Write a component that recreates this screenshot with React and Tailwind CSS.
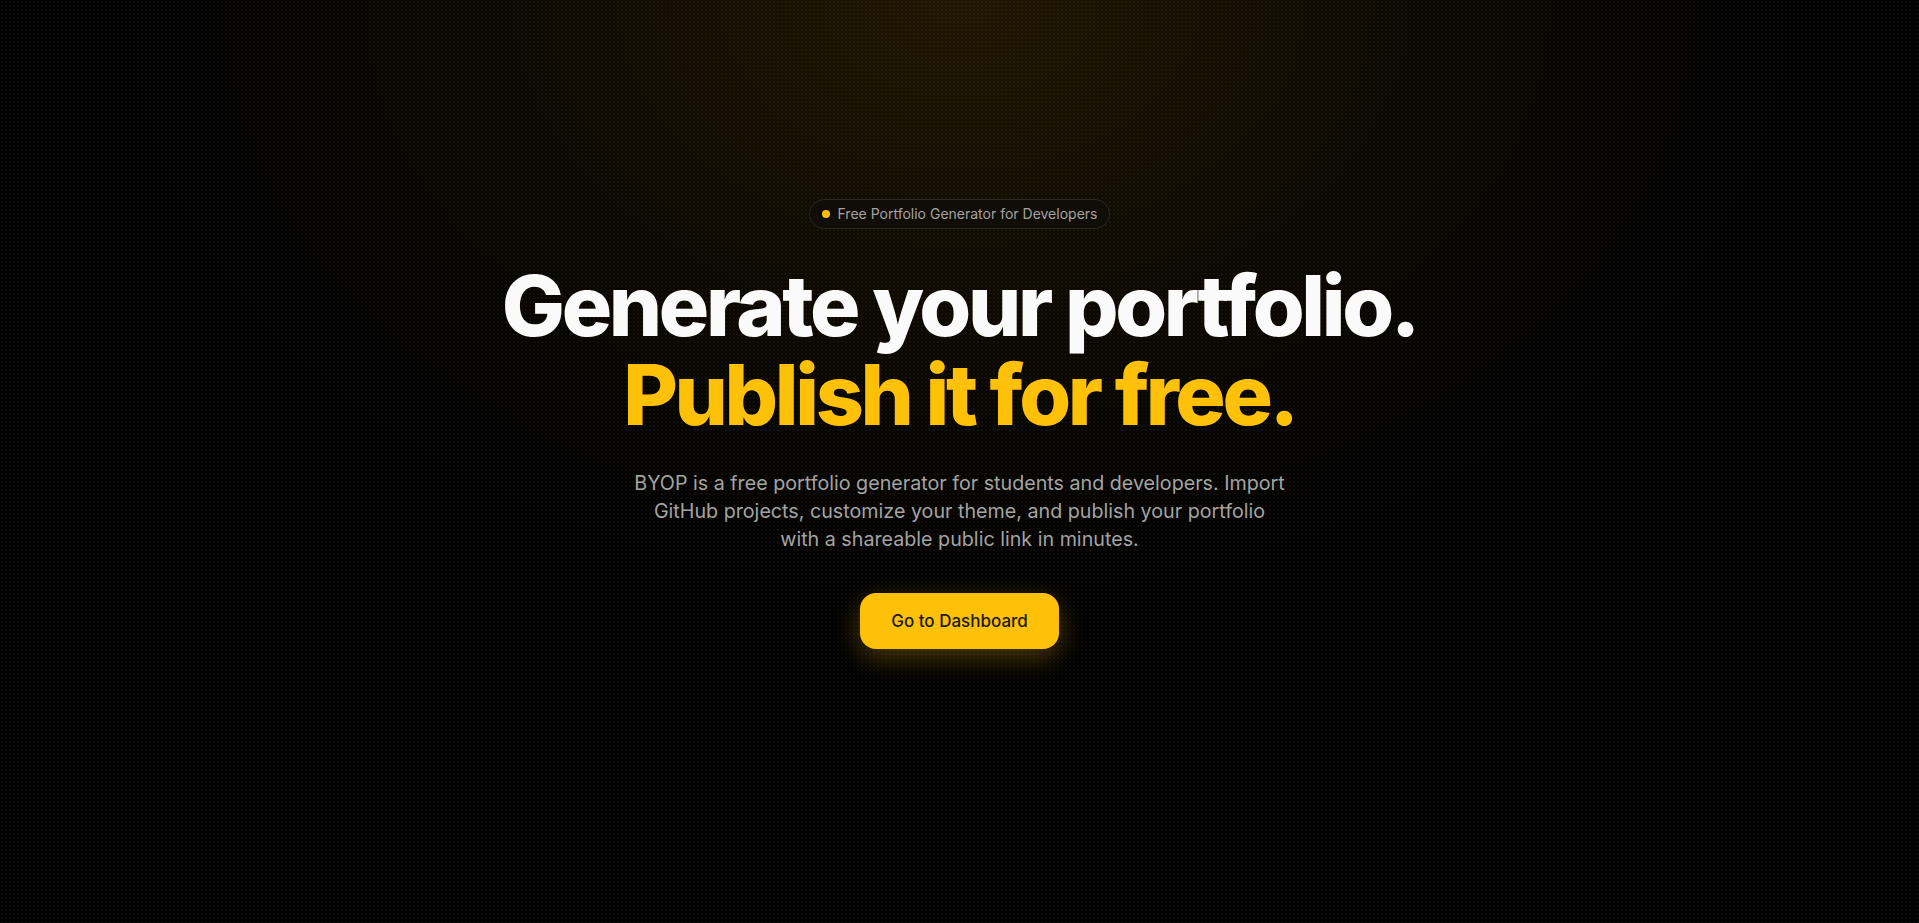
import React from "react";

export default function App() {
  return (
    <div
      className="relative min-h-screen w-full overflow-hidden bg-black"
      style={{ fontFamily: "Inter, 'Noto Sans', sans-serif" }}
    >
      <div className="pointer-events-none absolute inset-0 bg-[radial-gradient(rgba(255,255,255,0.06)_0.6px,transparent_0.9px)] bg-[length:4px_4px]" />
      <div className="pointer-events-none absolute inset-0 bg-[radial-gradient(ellipse_46%_68%_at_50%_0%,rgba(255,185,10,0.12),rgba(255,185,10,0.05)_50%,transparent_100%)]" />
      <main className="relative flex flex-col items-center pt-[199px] text-center">
        <div className="flex h-[30px] items-center gap-2 rounded-full border border-[#2a2723] bg-[rgba(16,13,8,0.8)] px-3">
          <span className="size-2 rounded-full bg-[#ffc107]" />
          <span className="text-sm text-[#a3a3a3]">Free Portfolio Generator for Developers</span>
        </div>
        <h1 className="mt-8 text-[84px] font-extrabold leading-[89px] tracking-[-0.04em]">
          <span className="block text-[#fafafa]">Generate your portfolio.</span>
          <span className="block text-[#ffc107]">Publish it for free.</span>
        </h1>
        <p className="mt-[30px] max-w-[654px] text-[19.7px] leading-7 text-[#a3a3a3]">
          BYOP is a free portfolio generator for students and developers. Import GitHub projects, customize your
          theme, and publish your portfolio with a shareable public link in minutes.
        </p>
        <button className="mt-10 rounded-2xl bg-[#ffc107] px-[31px] py-4 text-[17px] font-medium leading-6 text-[#1a1a1a] shadow-[0_8px_28px_rgba(255,193,7,0.3)]">
          Go to Dashboard
        </button>
      </main>
    </div>
  );
}
